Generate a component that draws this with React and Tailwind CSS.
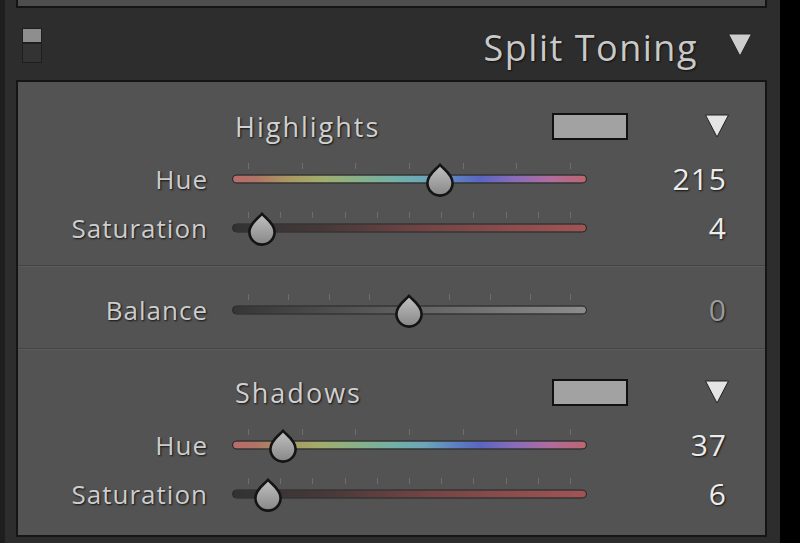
import React from "react";

const HUE_GRADIENT =
  "linear-gradient(to right, #b86c6c 0%, #b07266 6%, #aa9a62 16%, #9fae6e 26%, #86b08a 36%, #72b0a8 46%, #6ea6b8 54%, #5c7cc2 64%, #5a66c0 70%, #8a6cb8 80%, #b06c9c 90%, #bc6670 100%)";
const SAT_GRADIENT =
  "linear-gradient(to right, #323232 0%, #463838 25%, #744444 55%, #a25454 100%)";
const BAL_GRADIENT = "linear-gradient(to right, #363636 0%, #585858 40%, #8c8c8c 100%)";

const highlights = {
  title: "Highlights",
  rows: [
    { label: "Hue", value: "215", thumb: 208, ticks: 7, bg: HUE_GRADIENT },
    { label: "Saturation", value: "4", thumb: 30, ticks: 11, bg: SAT_GRADIENT },
  ],
};

const shadows = {
  title: "Shadows",
  rows: [
    { label: "Hue", value: "37", thumb: 51, ticks: 7, bg: HUE_GRADIENT },
    { label: "Saturation", value: "6", thumb: 36, ticks: 11, bg: SAT_GRADIENT },
  ],
};

const Thumb = ({ left }) => (
  <svg
    width="30"
    height="34"
    viewBox="0 0 30 34"
    className="absolute top-1/2 -translate-y-1/2 mt-[1px]"
    style={{ left: left - 15 }}
  >
    <defs>
      <linearGradient id="thumbFill" x1="0" y1="0" x2="0" y2="1">
        <stop offset="0%" stopColor="#c2c2c2" />
        <stop offset="100%" stopColor="#878787" />
      </linearGradient>
    </defs>
    <path
      d="M15 1.6 C17.5 5.5 27.6 11 27.6 20 A12.6 12.6 0 0 1 2.4 20 C2.4 11 12.5 5.5 15 1.6 Z"
      fill="url(#thumbFill)"
      stroke="#141414"
      strokeWidth="2.6"
      strokeLinejoin="round"
    />
  </svg>
);

const Triangle = ({ className = "", color = "#e4e4e4" }) => (
  <svg width="26" height="26" viewBox="0 0 26 26" className={className}>
    <path d="M1.5 2 L24.5 2 L13 24 Z" fill={color} stroke="#222" strokeWidth="1" strokeLinejoin="round" />
  </svg>
);

const SliderRow = ({ label, value, thumb, ticks, bg, h = "h-[50px]", dim = false }) => {
  const step = 322 / (ticks - 1);
  return (
    <div className={`flex items-center ${h}`}>
      <div className="w-[190px] text-right text-[26px] font-medium leading-none tracking-[1px] text-[#cdcdcd] [text-shadow:1px_1px_2px_rgba(0,0,0,0.8)]">
        {label}
      </div>
      <div className="relative ml-[24px] h-full w-[355px]">
        {Array.from({ length: ticks }).map((_, i) => (
          <div
            key={i}
            className="absolute top-1/2 -mt-[16px] h-[6px] w-px bg-[#6e6e6e]"
            style={{ left: 16 + i * step }}
          />
        ))}
        <div
          className="absolute left-0 right-0 top-1/2 h-[9px] -translate-y-1/2 rounded-full border-[1.5px] border-[#262626]"
          style={{ background: bg }}
        />
        <Thumb left={thumb} />
      </div>
      <div
        className={`w-[140px] text-right text-[30px] font-medium leading-none tracking-[1px] [text-shadow:1px_1px_2px_rgba(0,0,0,0.8)] ${
          dim ? "text-[#9a9a9a]" : "text-[#ececec]"
        }`}
      >
        {value}
      </div>
    </div>
  );
};

const Section = ({ data, className = "" }) => (
  <div className={className}>
    <div className="flex h-[40px] items-center">
      <div className="ml-[217px] w-[317px] text-[27px] font-medium leading-none tracking-[2px] text-[#d0d0d0] [text-shadow:1px_1px_2px_rgba(0,0,0,0.8)]">
        {data.title}
      </div>
      <div className="h-[27px] w-[76px] border-2 border-[#111] bg-[#a2a2a2]" />
      <Triangle className="ml-[76px]" />
    </div>
    <div className="mt-[8px]">
      <SliderRow {...data.rows[0]} />
      <SliderRow {...data.rows[1]} h="h-[48px]" />
    </div>
  </div>
);

const Divider = () => <div className="h-[2px] border-t border-b border-t-[#444444] border-b-[#5b5b5b]" />;

export default function App() {
  return (
    <div className="flex h-[543px] w-[800px] bg-black font-['Open_Sans',sans-serif]">
      <div className="flex w-[780px] flex-col border-l-[5px] border-[#1e1e1e] bg-[#2d2d2d] pl-[11px] pr-[13px]">
        <div className="h-[8px] border-x-2 border-b-2 border-[#141414] bg-[#4e4e4e]" />

        <div className="flex h-[72px] items-center pl-[6px] pr-[14px]">
          <div className="flex flex-col self-start mt-[20px]">
            <div className="h-[15px] w-[20px] border border-[#1e1e1e] bg-[#8e8e8e]" />
            <div className="h-[20px] w-[20px] border border-[#1e1e1e] bg-[#333333]" />
          </div>
          <div className="ml-auto mt-[8px] text-[36px] font-medium leading-none tracking-[1.5px] text-[#c9c9c9] [text-shadow:1px_1px_2px_rgba(0,0,0,0.7)]">
            Split Toning
          </div>
          <Triangle className="ml-[29px] mt-[2px]" color="#cdcdcd" />
        </div>

        <div className="flex h-[457px] flex-col border-2 border-[#151515] bg-[#535353]">
          <Section data={highlights} className="pt-[24px] pb-[13px]" />
          <Divider />
          <div className="pt-[19px] pb-[14px]">
            <SliderRow label="Balance" value="0" thumb={177} ticks={9} bg={BAL_GRADIENT} h="h-[48px]" dim />
          </div>
          <Divider />
          <Section data={shadows} className="pt-[22px]" />
        </div>
      </div>
    </div>
  );
}
